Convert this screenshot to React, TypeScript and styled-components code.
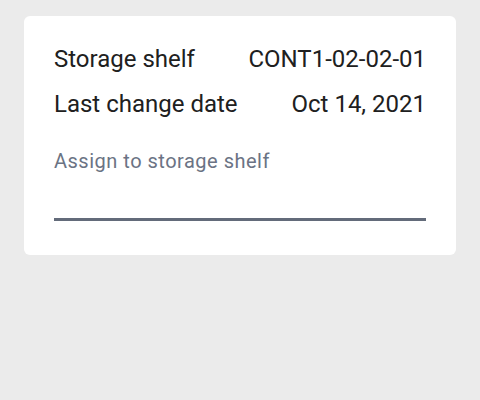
import React from 'react';
import styled, { createGlobalStyle } from 'styled-components';

const Global = createGlobalStyle`
  html, body {
    margin: 0;
    padding: 0;
    background: #ebebeb;
    font-family: Roboto, "Noto Sans", sans-serif;
  }
`;

const Page = styled.div`
  padding: 16px 24px;
`;

const Card = styled.div`
  background: #fff;
  border-radius: 6px;
  padding: 21px 30px 34px;
`;

const Row = styled.div`
  display: flex;
  justify-content: space-between;
  align-items: baseline;
  font-size: 24px;
  line-height: 45px;
  color: #202020;
`;

const Field = styled.div`
  margin-top: 22px;
`;

const FieldLabel = styled.label`
  display: block;
  font-size: 20px;
  letter-spacing: 0.5px;
  line-height: 24px;
  color: #6b7384;
`;

const Input = styled.input`
  display: block;
  width: 100%;
  box-sizing: border-box;
  border: none;
  border-bottom: 3px solid #636b7a;
  outline: none;
  background: transparent;
  font: inherit;
  font-size: 22px;
  height: 48px;
  padding: 0;
`;

export default function App() {
  return (
    <Page>
      <Global />
      <Card>
        <Row>
          <span>Storage shelf</span>
          <span>CONT1-02-02-01</span>
        </Row>
        <Row>
          <span>Last change date</span>
          <span>Oct 14, 2021</span>
        </Row>
        <Field>
          <FieldLabel>Assign to storage shelf</FieldLabel>
          <Input />
        </Field>
      </Card>
    </Page>
  );
}
